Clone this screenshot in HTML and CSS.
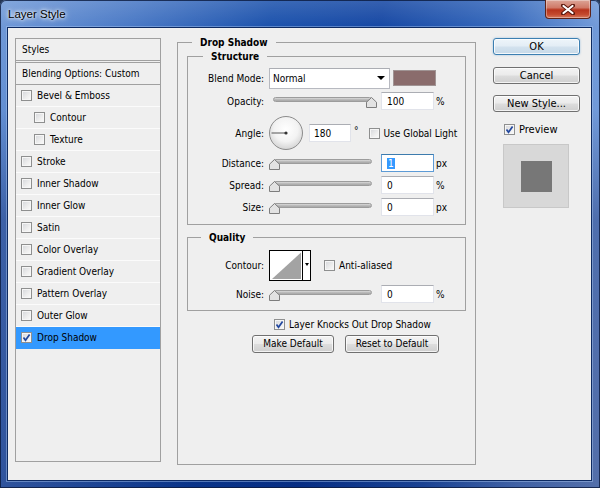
FILE: index.html
```html
<!DOCTYPE html>
<html>
<head>
<meta charset="utf-8">
<title>Layer Style</title>
<link rel="stylesheet" href="styles.css">
</head>
<body>
<div class="window">
  <div class="titlebar">
    <span class="title">Layer Style</span>
    <div class="close">
      <svg width="14" height="11" viewBox="0 0 14 11"><path d="M2 1.5 L12 9.5 M12 1.5 L2 9.5" stroke="#5a170c" stroke-width="4" stroke-linecap="round"/><path d="M2.5 2 L11.5 9 M11.5 2 L2.5 9" stroke="#fff" stroke-width="2.2" stroke-linecap="round"/></svg>
    </div>
  </div>
  <div class="client">
    <div class="styles-panel">
      <div class="sp-head">Styles</div>
      <div class="sp-blend">Blending Options: Custom</div>
      <div class="sp-item"><span class="cb"></span>Bevel &amp; Emboss</div>
      <div class="sp-item sub"><span class="cb"></span>Contour</div>
      <div class="sp-item sub"><span class="cb"></span>Texture</div>
      <div class="sp-item"><span class="cb"></span>Stroke</div>
      <div class="sp-item"><span class="cb"></span>Inner Shadow</div>
      <div class="sp-item"><span class="cb"></span>Inner Glow</div>
      <div class="sp-item"><span class="cb"></span>Satin</div>
      <div class="sp-item"><span class="cb"></span>Color Overlay</div>
      <div class="sp-item"><span class="cb"></span>Gradient Overlay</div>
      <div class="sp-item"><span class="cb"></span>Pattern Overlay</div>
      <div class="sp-item"><span class="cb"></span>Outer Glow</div>
      <div class="sp-item active"><span class="cb"><svg width="9" height="9" viewBox="0 0 9 9"><path d="M1.5 4.5 L3.5 7.2 L7.6 1.4" fill="none" stroke="#22479e" stroke-width="1.7"/></svg></span>Drop Shadow</div>
    </div>

    <fieldset class="group main">
      <legend>Drop Shadow</legend>
      <fieldset class="group structure">
        <legend>Structure</legend>
        <div class="row r-blend">
          <span class="lbl">Blend Mode:</span>
          <div class="select"><span>Normal</span><span class="tri"></span></div>
          <div class="swatch"></div>
        </div>
        <div class="row r-opacity">
          <span class="lbl">Opacity:</span>
          <div class="slider"><div class="track"></div><svg class="thumb end" width="11" height="11" viewBox="0 0 11 11"><path d="M5.5 .5 L10.5 5.2 V10.5 H.5 V5.2 Z" fill="#e2e2e2" stroke="#7d7d7d"/></svg></div>
          <div class="field">100</div><span class="unit">%</span>
        </div>
        <div class="row r-angle">
          <span class="lbl">Angle:</span>
          <svg class="dial" width="34" height="34" viewBox="0 0 34 34"><defs><radialGradient id="dg" cx="50%" cy="40%" r="60%"><stop offset="0" stop-color="#ffffff"/><stop offset="0.6" stop-color="#f3f3f3"/><stop offset="1" stop-color="#d4d4d4"/></radialGradient></defs><circle cx="17" cy="17" r="16.5" fill="url(#dg)" stroke="#8c8c8c"/><line x1="17" y1="17" x2="2.5" y2="17" stroke="#555" stroke-width="1"/><circle cx="17" cy="17" r="1.6" fill="#333"/></svg>
          <div class="field angle">180</div><span class="deg">°</span>
          <span class="cb gl"></span><span class="cbtext">Use Global Light</span>
        </div>
        <div class="row r-distance">
          <span class="lbl">Distance:</span>
          <div class="slider"><div class="track"></div><svg class="thumb" width="11" height="11" viewBox="0 0 11 11"><path d="M5.5 .5 L10.5 5.2 V10.5 H.5 V5.2 Z" fill="#e2e2e2" stroke="#7d7d7d"/></svg></div>
          <div class="field focus"><span class="sel">1</span></div><span class="unit">px</span>
        </div>
        <div class="row">
          <span class="lbl">Spread:</span>
          <div class="slider"><div class="track"></div><svg class="thumb" width="11" height="11" viewBox="0 0 11 11"><path d="M5.5 .5 L10.5 5.2 V10.5 H.5 V5.2 Z" fill="#e2e2e2" stroke="#7d7d7d"/></svg></div>
          <div class="field">0</div><span class="unit">%</span>
        </div>
        <div class="row">
          <span class="lbl">Size:</span>
          <div class="slider"><div class="track"></div><svg class="thumb" width="11" height="11" viewBox="0 0 11 11"><path d="M5.5 .5 L10.5 5.2 V10.5 H.5 V5.2 Z" fill="#e2e2e2" stroke="#7d7d7d"/></svg></div>
          <div class="field">0</div><span class="unit">px</span>
        </div>
      </fieldset>

      <fieldset class="group quality">
        <legend>Quality</legend>
        <div class="row r-contour">
          <span class="lbl">Contour:</span>
          <div class="contour">
            <svg class="curve" width="32" height="29" viewBox="0 0 32 29"><rect width="32" height="29" fill="#fff"/><path d="M2 28 L31 1.5 V28 Z" fill="#a3a3a3"/></svg>
            <div class="cdrop"><span class="tri small"></span></div>
          </div>
          <span class="cb aa"></span><span class="cbtext">Anti-aliased</span>
        </div>
        <div class="row r-noise">
          <span class="lbl">Noise:</span>
          <div class="slider"><div class="track"></div><svg class="thumb" width="11" height="11" viewBox="0 0 11 11"><path d="M5.5 .5 L10.5 5.2 V10.5 H.5 V5.2 Z" fill="#e2e2e2" stroke="#7d7d7d"/></svg></div>
          <div class="field">0</div><span class="unit">%</span>
        </div>
      </fieldset>

      <div class="knock"><span class="cb"><svg width="9" height="9" viewBox="0 0 9 9"><path d="M1.5 4.5 L3.5 7.2 L7.6 1.4" fill="none" stroke="#22479e" stroke-width="1.7"/></svg></span><span class="cbtext">Layer Knocks Out Drop Shadow</span></div>
      <div class="btnrow">
        <button class="btn make">Make Default</button>
        <button class="btn reset">Reset to Default</button>
      </div>
    </fieldset>

    <div class="side">
      <button class="btn big default">OK</button>
      <button class="btn big cancel">Cancel</button>
      <button class="btn big newstyle">New Style...</button>
      <div class="preview-row"><span class="cb"><svg width="9" height="9" viewBox="0 0 9 9"><path d="M1.5 4.5 L3.5 7.2 L7.6 1.4" fill="none" stroke="#22479e" stroke-width="1.7"/></svg></span><span class="pvtext">Preview</span></div>
      <div class="preview"><div class="pv-square"></div></div>
    </div>
  </div>
</div>
</body>
</html>
```

FILE: styles.css
```css
* { box-sizing: border-box; }
html, body { margin: 0; padding: 0; }
body {
  width: 600px;
  height: 488px;
  overflow: hidden;
  background: #243554;
  font-family: "DejaVu Sans Condensed", "DejaVu Sans", sans-serif;
  font-stretch: condensed;
  font-size: 10px;
  color: #000;
}

.window {
  width: 600px;
  height: 488px;
  border-radius: 6px 6px 0 0;
  background:
    linear-gradient(180deg, rgba(255,255,255,0.18) 0, rgba(255,255,255,0.05) 27px, rgba(0,20,90,0) 110px, rgba(0,20,90,0.35) 220px, rgba(0,20,90,0.4) 100%),
    linear-gradient(100deg, #6a95d6 0%, #3f71c2 20%, #1049a8 40%, #0a3e9f 56%, #2a60b8 74%, #6c96d7 88%, #8bacdf 100%);
  box-shadow: inset 0 0 0 1px rgba(10, 25, 60, 0.8);
  display: flex;
  flex-direction: column;
}

.titlebar {
  height: 27px;
  display: flex;
  align-items: flex-start;
  padding-left: 8px;
  flex: none;
}
.title {
  font-family: "Liberation Sans", sans-serif;
  font-stretch: normal;
  font-size: 11.5px;
  line-height: 13px;
  margin-top: 8px;
  color: #000;
  text-shadow: 0 0 5px #fff, 0 0 3px rgba(255,255,255,0.9), 0 0 8px rgba(255,255,255,0.6);
}
.close {
  margin-left: auto;
  margin-right: 9px;
  width: 46px;
  height: 19px;
  border: 1px solid #5e2318;
  border-top: none;
  border-radius: 0 0 4px 4px;
  background: linear-gradient(#dca597 0%, #d07a68 42%, #b8341c 55%, #c4492d 80%, #d67a5e 100%);
  box-shadow: inset 0 0 0 1px rgba(255,255,255,0.35);
  display: flex;
  align-items: center;
  justify-content: center;
}

.client {
  margin: 0 8px 0 7px;
  height: 454px;
  flex: none;
  border: 1px solid #0d2a62;
  box-shadow: 0 0 0 1px rgba(170, 200, 240, 0.45);
  background: #efefef;
  display: flex;
  align-items: flex-start;
  padding-left: 7px;
}

/* Styles list */
.styles-panel {
  width: 146px;
  height: 424px;
  margin-top: 10px;
  border: 1px solid #a0a0a0;
  flex: none;
}
.sp-head {
  height: 24px;
  line-height: 21px;
  padding-left: 6px;
  border-bottom: 3px double #a0a0a0;
}
.sp-blend {
  height: 22px;
  line-height: 21px;
  padding-left: 6px;
  border-bottom: 1px solid #a0a0a0;
}
.sp-item {
  height: 22px;
  display: flex;
  align-items: center;
  padding-left: 5px;
  border-bottom: 1px solid #fbfbfb;
}
.sp-item.sub { padding-left: 18px; }
.sp-item .cb { margin-right: 5px; }
.sp-item.active { background: #3399ff; border-bottom-color: #3399ff; }

/* checkbox */
.cb {
  width: 11px;
  height: 11px;
  flex: none;
  border: 1px solid #8e8f8f;
  background: linear-gradient(135deg, #d4d6da 0%, #eeeeee 60%, #fbfbfb 100%);
  box-shadow: inset 0 0 0 1px #f6f6f6;
  display: inline-flex;
  align-items: center;
  justify-content: center;
}
.cb svg { display: block; }

/* group boxes */
fieldset.group {
  border: 1px solid #a0a0a0;
  min-inline-size: 0;
}
fieldset.group > legend {
  padding: 0 8px;
  font-weight: bold;
  font-size: 10px;
  line-height: 13px;
  height: 13px;
}
fieldset.main {
  margin: 8px 0 0 16px;
  width: 299px;
  height: 429px;
  padding: 0 9px 0 9px;
  flex: none;
}
fieldset.main > legend { margin-left: 5px; }
fieldset.structure {
  margin: 1px 0 0 0;
  width: 100%;
  padding: 4px 0 6px 0;
}
fieldset.structure > legend { margin-left: 15px; }
fieldset.quality {
  margin: 6px 0 0 0;
  width: 100%;
  padding: 5px 0 5px 0;
}
fieldset.quality > legend { margin-left: 13px; }

.row {
  display: flex;
  align-items: center;
  height: 22px;
}
.lbl {
  width: 76px;
  text-align: right;
  margin-right: 5px;
  flex: none;
  white-space: nowrap;
}
.r-opacity { margin-top: 1px; }
.r-angle { margin-top: 4px; height: 34px; }
.r-distance { margin-top: 2px; }
.r-contour { height: 32px; }
.r-noise { margin-top: 2px; }

.select {
  width: 121px;
  height: 21px;
  border: 1px solid #b7b9c0;
  border-top-color: #abadb3;
  background: #fff;
  display: flex;
  align-items: center;
  padding-left: 3px;
  flex: none;
}
.tri {
  margin-left: auto;
  margin-right: 4px;
  width: 0;
  height: 0;
  border-left: 4px solid transparent;
  border-right: 4px solid transparent;
  border-top: 4px solid #000;
}
.swatch {
  width: 43px;
  height: 16px;
  margin-left: 3px;
  background: #8a6c6c;
  border: 1px solid #a09494;
  flex: none;
}

.slider {
  position: relative;
  width: 108px;
  height: 12px;
  margin-top: 4px;
  flex: none;
}
.track {
  position: absolute;
  left: 4px;
  top: 0;
  width: 99px;
  height: 5px;
  border-radius: 3px;
  border: 1px solid #9c9c9c;
  background: linear-gradient(#dadada, #b4b4b4 60%, #a8a8a8);
}
.thumb { position: absolute; left: 0; top: 0; display: block; }
.thumb.end { left: 97px; }

.field {
  width: 53px;
  height: 18px;
  margin-left: 4px;
  background: #fff;
  border: 1px solid #e1e3ea;
  border-top-color: #abadb3;
  padding-left: 5px;
  display: flex;
  align-items: center;
  flex: none;
}
.field.focus { border-color: #5d9bd6; border-top-color: #3d7bad; }
.sel { background: #3399ff; color: #fff; padding: 0 1px; line-height: 11px; }
.unit { margin-left: 2px; }

.dial { display: block; flex: none; }
.field.angle { width: 42px; margin-left: 6px; padding-left: 4px; }
.deg { margin-left: 3px; align-self: flex-start; margin-top: 9px; }
.gl { margin-left: 10px; }
.cbtext { margin-left: 4px; white-space: nowrap; }

.contour {
  width: 42px;
  height: 31px;
  border: 1px solid #000;
  background: #fff;
  display: flex;
  flex: none;
}
.curve { display: block; flex: none; }
.cdrop {
  flex: 1;
  border-left: 1px solid #000;
  display: flex;
  align-items: flex-start;
  justify-content: center;
  padding-top: 12px;
}
.tri.small {
  margin: 0;
  border-left-width: 2.5px;
  border-right-width: 2.5px;
  border-top-width: 3px;
}
.aa { margin-left: 13px; }

.knock {
  margin-top: 5px;
  height: 16px;
  display: flex;
  align-items: center;
  padding-left: 87px;
}
.btnrow {
  margin-top: 3px;
  display: flex;
  gap: 11px;
  padding-left: 65px;
}

.btn {
  font-family: "DejaVu Sans Condensed", "DejaVu Sans", sans-serif;
  font-stretch: condensed;
  font-size: 10px;
  color: #000;
  height: 18px;
  padding: 0;
  border: 1px solid #707070;
  border-radius: 3px;
  background: linear-gradient(#f3f3f3 0%, #ebebeb 48%, #dddddd 52%, #cfcfcf 100%);
  box-shadow: inset 0 0 0 1px rgba(255,255,255,0.75);
  line-height: 14px;
}
.btn.make { width: 82px; }
.btn.reset { width: 94px; }
.btn.big { width: 87px; height: 17px; font-size: 11px; line-height: 14px; }
.btn.default {
  border-color: #3c7fb1;
  background: linear-gradient(#eef5fa 0%, #e3edf5 48%, #d3e2ee 52%, #c6d9e8 100%);
  box-shadow: inset 0 0 0 1px rgba(255,255,255,0.8), 0 0 2px rgba(60,140,210,0.5);
}

.side {
  margin: 10px 0 0 17px;
  width: 87px;
  display: flex;
  flex-direction: column;
  flex: none;
}
.side .cancel { margin-top: 12px; }
.side .newstyle { margin-top: 11px; }
.preview-row {
  margin-top: 9px;
  height: 16px;
  display: flex;
  align-items: center;
  padding-left: 11px;
}
.pvtext { margin-left: 4px; font-size: 11px; }
.preview {
  margin-top: 7px;
  margin-left: 10px;
  width: 66px;
  height: 64px;
  background: #d8d8d8;
  border: 1px solid #c8c8c8;
  display: flex;
  align-items: center;
  justify-content: center;
}
.pv-square { width: 31px; height: 31px; background: #777777; }
```
